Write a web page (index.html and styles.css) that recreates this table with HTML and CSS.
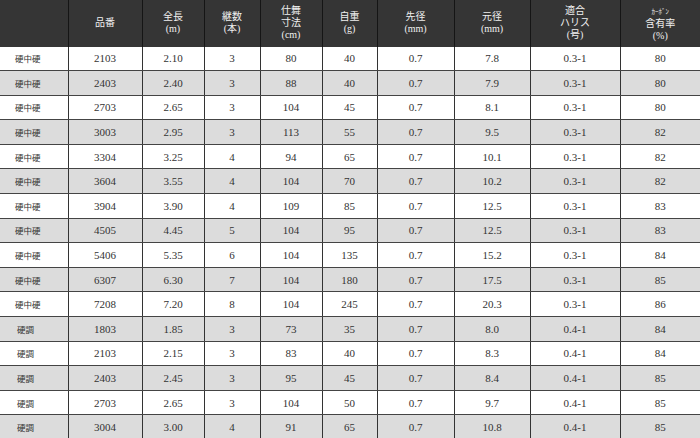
FILE: index.html
```html
<!DOCTYPE html>
<html lang="ja">
<head>
<meta charset="utf-8">
<link rel="stylesheet" href="styles.css">
</head>
<body>
<table class="spec">
<colgroup>
<col class="c1"><col class="c2"><col class="c3"><col class="c4"><col class="c5"><col class="c6"><col class="c7"><col class="c8"><col class="c9"><col class="c10">
</colgroup>
<thead>
<tr>
<th></th>
<th>品番</th>
<th>全長<br>(m)</th>
<th>継数<br>(本)</th>
<th>仕舞<br>寸法<br>(cm)</th>
<th>自重<br>(g)</th>
<th>先径<br>(mm)</th>
<th>元径<br>(mm)</th>
<th>適合<br>ハリス<br>(号)</th>
<th><span class="tiny">ｶｰﾎﾞﾝ</span><br>含有率<br>(%)</th>
</tr>
</thead>
<tbody>
<tr><td class="kind">硬中硬</td><td>2103</td><td>2.10</td><td>3</td><td>80</td><td>40</td><td>0.7</td><td>7.8</td><td>0.3-1</td><td>80</td></tr>
<tr class="alt"><td class="kind">硬中硬</td><td>2403</td><td>2.40</td><td>3</td><td>88</td><td>40</td><td>0.7</td><td>7.9</td><td>0.3-1</td><td>80</td></tr>
<tr><td class="kind">硬中硬</td><td>2703</td><td>2.65</td><td>3</td><td>104</td><td>45</td><td>0.7</td><td>8.1</td><td>0.3-1</td><td>80</td></tr>
<tr class="alt"><td class="kind">硬中硬</td><td>3003</td><td>2.95</td><td>3</td><td>113</td><td>55</td><td>0.7</td><td>9.5</td><td>0.3-1</td><td>82</td></tr>
<tr><td class="kind">硬中硬</td><td>3304</td><td>3.25</td><td>4</td><td>94</td><td>65</td><td>0.7</td><td>10.1</td><td>0.3-1</td><td>82</td></tr>
<tr class="alt"><td class="kind">硬中硬</td><td>3604</td><td>3.55</td><td>4</td><td>104</td><td>70</td><td>0.7</td><td>10.2</td><td>0.3-1</td><td>82</td></tr>
<tr><td class="kind">硬中硬</td><td>3904</td><td>3.90</td><td>4</td><td>109</td><td>85</td><td>0.7</td><td>12.5</td><td>0.3-1</td><td>83</td></tr>
<tr class="alt"><td class="kind">硬中硬</td><td>4505</td><td>4.45</td><td>5</td><td>104</td><td>95</td><td>0.7</td><td>12.5</td><td>0.3-1</td><td>83</td></tr>
<tr><td class="kind">硬中硬</td><td>5406</td><td>5.35</td><td>6</td><td>104</td><td>135</td><td>0.7</td><td>15.2</td><td>0.3-1</td><td>84</td></tr>
<tr class="alt"><td class="kind">硬中硬</td><td>6307</td><td>6.30</td><td>7</td><td>104</td><td>180</td><td>0.7</td><td>17.5</td><td>0.3-1</td><td>85</td></tr>
<tr><td class="kind">硬中硬</td><td>7208</td><td>7.20</td><td>8</td><td>104</td><td>245</td><td>0.7</td><td>20.3</td><td>0.3-1</td><td>86</td></tr>
<tr class="alt"><td class="kind k2">硬調</td><td>1803</td><td>1.85</td><td>3</td><td>73</td><td>35</td><td>0.7</td><td>8.0</td><td>0.4-1</td><td>84</td></tr>
<tr><td class="kind k2">硬調</td><td>2103</td><td>2.15</td><td>3</td><td>83</td><td>40</td><td>0.7</td><td>8.3</td><td>0.4-1</td><td>84</td></tr>
<tr class="alt"><td class="kind k2">硬調</td><td>2403</td><td>2.45</td><td>3</td><td>95</td><td>45</td><td>0.7</td><td>8.4</td><td>0.4-1</td><td>85</td></tr>
<tr><td class="kind k2">硬調</td><td>2703</td><td>2.65</td><td>3</td><td>104</td><td>50</td><td>0.7</td><td>9.7</td><td>0.4-1</td><td>85</td></tr>
<tr class="alt"><td class="kind k2">硬調</td><td>3004</td><td>3.00</td><td>4</td><td>91</td><td>65</td><td>0.7</td><td>10.8</td><td>0.4-1</td><td>85</td></tr>
</tbody>
</table>
</body>
</html>
```
FILE: styles.css
```css
html, body {
  margin: 0;
  padding: 0;
  background: #ffffff;
  overflow: hidden;
}
.spec {
  width: 700px;
  table-layout: fixed;
  border-collapse: collapse;
  font-family: "Liberation Serif", "Noto Sans CJK JP", serif;
  color: #333333;
}
.c1 { width: 68px; }
.c2 { width: 74px; }
.c3 { width: 62px; }
.c4 { width: 56px; }
.c5 { width: 62px; }
.c6 { width: 55px; }
.c7 { width: 77px; }
.c8 { width: 76px; }
.c9 { width: 90px; }
.c10 { width: 80px; }
.spec th {
  background: #353535;
  color: #f0f0f0;
  font-weight: normal;
  font-size: 10px;
  line-height: 12px;
  height: 46.5px;
  padding: 0;
  text-align: center;
  vertical-align: middle;
  border-left: 1px solid #151515;
}
.spec th:first-child { border-left: none; }
.tiny {
  font-size: 7px;
}
.spec td {
  height: 23.6px;
  padding: 0;
  text-align: center;
  vertical-align: middle;
  font-size: 11px;
  border-left: 1px solid #333;
  border-bottom: 1px solid #444;
}
.spec td:first-child { border-left: none; }
.spec tr.alt td { background: #dcdcdc; }
.spec td.kind {
  text-align: left;
  padding-left: 15px;
  font-size: 8.5px;
}
.spec td.k2 { padding-left: 17px; }
```
